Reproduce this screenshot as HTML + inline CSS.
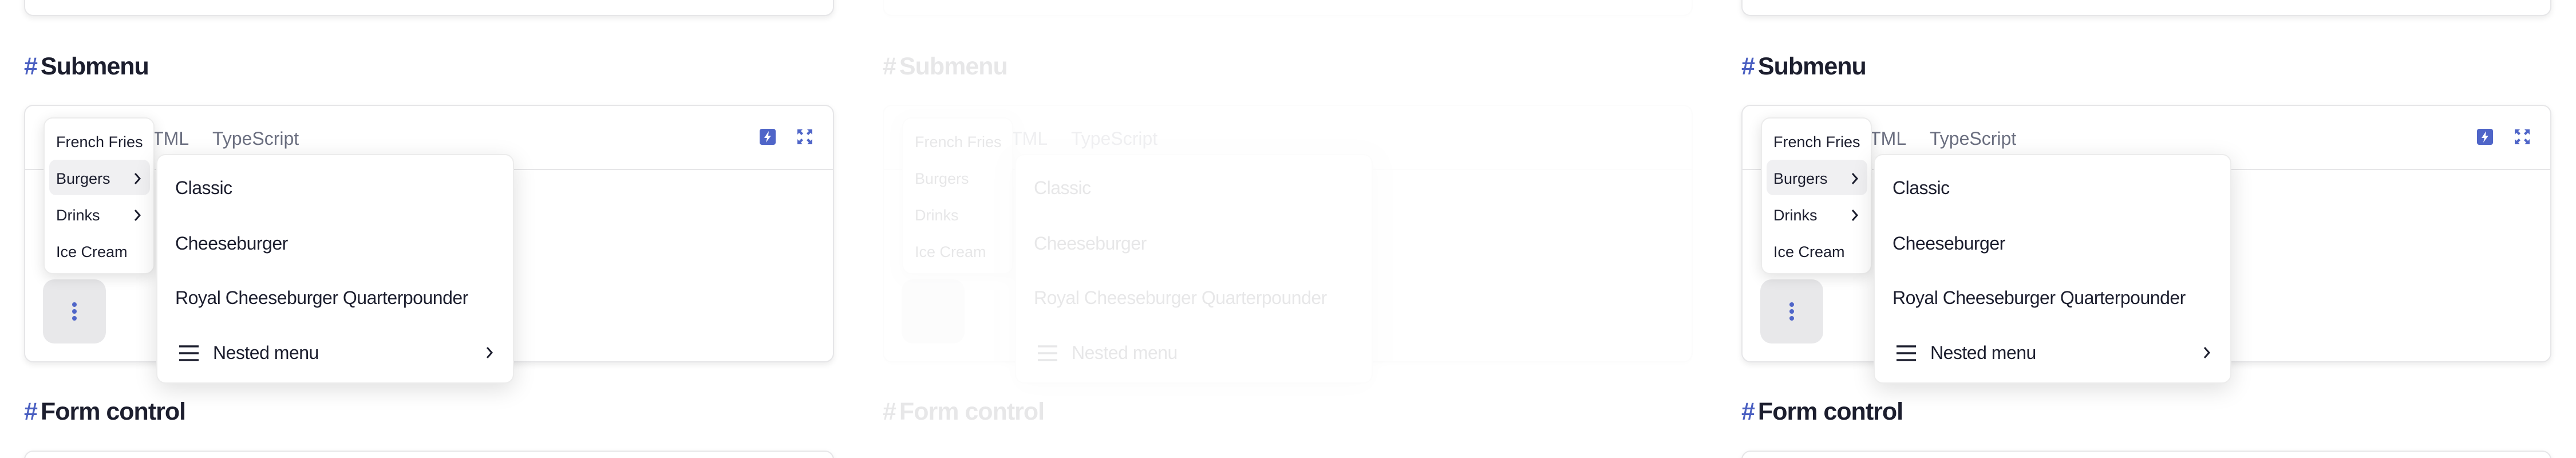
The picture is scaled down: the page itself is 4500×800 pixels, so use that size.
<!DOCTYPE html>
<html style="width:4500px;height:800px;overflow:hidden"><head><meta charset="utf-8"><style>
*{box-sizing:border-box;margin:0;padding:0}
body{width:4500px;height:800px;background:#fff;overflow:hidden;position:relative;font-family:"Liberation Sans",sans-serif;color:#1c1e2e}
.p{position:absolute;top:0;width:1500px;height:800px;overflow:hidden}
.card{position:absolute;left:42px;width:1415px;background:#fff;border:2px solid #e6e6e8;border-radius:16px;box-shadow:0 4px 10px rgba(0,0,0,.08)}
.h{position:absolute;left:42px;font-weight:bold;font-size:43px;letter-spacing:-1px;color:#1c1e2e}
.h b{color:#4a5fc1;margin-right:6px}
.tab{position:absolute;top:224px;font-size:32px;color:#6b6f80}
.m1{position:absolute;left:76px;top:205px;width:194px;height:274px;background:#fff;border:2px solid #ececec;border-radius:16px;box-shadow:0 6px 24px rgba(0,0,0,.12)}
.i1{position:absolute;left:20px;font-size:27px;color:#1c1e2e}
.ch{position:absolute}
.m2{position:absolute;left:273px;top:269px;width:625px;height:401px;background:#fff;border:2px solid #ececec;border-radius:16px;box-shadow:0 10px 40px rgba(0,0,0,.13)}
.i2{position:absolute;left:31px;font-size:32px;letter-spacing:-.5px;color:#1c1e2e}
.ic{position:absolute;top:225px;width:28px;height:28px}
</style></head><body>

<div class="p" style="left:0">
 <div class="card" style="top:-20px;height:48px"></div>
 <div class="h" style="top:92px"><b>#</b>Submenu</div>
 <div class="card" style="top:183px;height:450px">
  <div style="position:absolute;left:0;right:0;top:110px;border-top:2px solid #e6e6e8"></div>
 </div>
 <div class="tab" style="left:243px">HTML</div>
 <div class="tab" style="left:371px">TypeScript</div>
 <svg class="ic" style="left:1327px" viewBox="0 0 28 28"><rect width="28" height="28" rx="4" fill="#4f65c8"/><path d="M16 4 L8 16 H13 L11 24 L20 12 H15 Z" fill="#fff"/></svg>
 <svg class="ic" style="left:1392px" viewBox="0 0 28 28" fill="#4f65c8"><path d="M1 1H10L7 4L11 8L8 11L4 7L1 10Z"/><path d="M27 1H18L21 4L17 8L20 11L24 7L27 10Z"/><path d="M1 27H10L7 24L11 20L8 17L4 21L1 18Z"/><path d="M27 27H18L21 24L17 20L20 17L24 21L27 18Z"/></svg>
 <div style="position:absolute;left:75px;top:488px;width:110px;height:112px;background:#e8e8ea;border-radius:20px">
  <div style="position:absolute;left:51px;top:40px;width:8px;height:8px;border-radius:50%;background:#4f65c8;box-shadow:0 12px 0 #4f65c8,0 24px 0 #4f65c8"></div>
 </div>
 <div class="m1">
  <div style="position:absolute;left:8px;top:72px;width:176px;height:62px;background:#f0f0f2;border-radius:12px"></div>
  <div class="i1" style="top:26px">French Fries</div>
  <div class="i1" style="top:90px">Burgers</div><svg class="ch" style="left:156px;top:94px" width="12" height="22" viewBox="0 0 12 22"><path d="M2 2L10 11L2 20" stroke="#1c1e2e" stroke-width="3" fill="none"/></svg>
  <div class="i1" style="top:154px">Drinks</div><svg class="ch" style="left:156px;top:158px" width="12" height="22" viewBox="0 0 12 22"><path d="M2 2L10 11L2 20" stroke="#1c1e2e" stroke-width="3" fill="none"/></svg>
  <div class="i1" style="top:218px">Ice Cream</div>
 </div>
 <div class="m2">
  <div class="i2" style="top:39px">Classic</div>
  <div class="i2" style="top:136px">Cheeseburger</div>
  <div class="i2" style="top:231px">Royal Cheeseburger Quarterpounder</div>
  <svg style="position:absolute;left:36px;top:331px" width="38" height="30" viewBox="0 0 38 30"><path d="M2 3H36M2 15H36M2 27H36" stroke="#1c1e2e" stroke-width="3.5"/></svg>
  <div class="i2" style="left:97px;top:327px">Nested menu</div>
  <svg class="ch" style="left:574px;top:334px" width="12" height="22" viewBox="0 0 12 22"><path d="M2 2L10 11L2 20" stroke="#1c1e2e" stroke-width="3" fill="none"/></svg>
 </div>
 <div class="h" style="top:695px"><b>#</b>Form control</div>
 <div class="card" style="top:787px;height:40px"></div>
</div>

<div class="p" style="left:1500px;opacity:.1">
 <div class="card" style="top:-20px;height:48px"></div>
 <div class="h" style="top:92px"><b style="color:#1c1e2e">#</b>Submenu</div>
 <div class="card" style="top:183px;height:450px"><div style="position:absolute;left:0;right:0;top:110px;border-top:2px solid #e6e6e8"></div></div>
 <div class="tab" style="left:243px">HTML</div>
 <div class="tab" style="left:371px">TypeScript</div>
 <div style="position:absolute;left:75px;top:488px;width:110px;height:112px;background:#e8e8ea;border-radius:20px"></div>
 <div class="m1"><div class="i1" style="top:26px">French Fries</div><div class="i1" style="top:90px">Burgers</div><div class="i1" style="top:154px">Drinks</div><div class="i1" style="top:218px">Ice Cream</div></div>
 <div class="m2"><div class="i2" style="top:39px">Classic</div><div class="i2" style="top:136px">Cheeseburger</div><div class="i2" style="top:231px">Royal Cheeseburger Quarterpounder</div>
 <svg style="position:absolute;left:36px;top:331px" width="38" height="30" viewBox="0 0 38 30"><path d="M2 3H36M2 15H36M2 27H36" stroke="#1c1e2e" stroke-width="3.5"/></svg>
 <div class="i2" style="left:97px;top:327px">Nested menu</div></div>
 <div class="h" style="top:695px"><b style="color:#1c1e2e">#</b>Form control</div>
</div>

<div class="p" style="left:3000px">
 <div class="card" style="top:-20px;height:48px"></div>
 <div class="h" style="top:92px"><b>#</b>Submenu</div>
 <div class="card" style="top:183px;height:450px">
  <div style="position:absolute;left:0;right:0;top:110px;border-top:2px solid #e6e6e8"></div>
 </div>
 <div class="tab" style="left:243px">HTML</div>
 <div class="tab" style="left:371px">TypeScript</div>
 <svg class="ic" style="left:1327px" viewBox="0 0 28 28"><rect width="28" height="28" rx="4" fill="#4f65c8"/><path d="M16 4 L8 16 H13 L11 24 L20 12 H15 Z" fill="#fff"/></svg>
 <svg class="ic" style="left:1392px" viewBox="0 0 28 28" fill="#4f65c8"><path d="M1 1H10L7 4L11 8L8 11L4 7L1 10Z"/><path d="M27 1H18L21 4L17 8L20 11L24 7L27 10Z"/><path d="M1 27H10L7 24L11 20L8 17L4 21L1 18Z"/><path d="M27 27H18L21 24L17 20L20 17L24 21L27 18Z"/></svg>
 <div style="position:absolute;left:75px;top:488px;width:110px;height:112px;background:#e8e8ea;border-radius:20px">
  <div style="position:absolute;left:51px;top:40px;width:8px;height:8px;border-radius:50%;background:#4f65c8;box-shadow:0 12px 0 #4f65c8,0 24px 0 #4f65c8"></div>
 </div>
 <div class="m1">
  <div style="position:absolute;left:8px;top:72px;width:176px;height:62px;background:#f0f0f2;border-radius:12px"></div>
  <div class="i1" style="top:26px">French Fries</div>
  <div class="i1" style="top:90px">Burgers</div><svg class="ch" style="left:156px;top:94px" width="12" height="22" viewBox="0 0 12 22"><path d="M2 2L10 11L2 20" stroke="#1c1e2e" stroke-width="3" fill="none"/></svg>
  <div class="i1" style="top:154px">Drinks</div><svg class="ch" style="left:156px;top:158px" width="12" height="22" viewBox="0 0 12 22"><path d="M2 2L10 11L2 20" stroke="#1c1e2e" stroke-width="3" fill="none"/></svg>
  <div class="i1" style="top:218px">Ice Cream</div>
 </div>
 <div class="m2">
  <div class="i2" style="top:39px">Classic</div>
  <div class="i2" style="top:136px">Cheeseburger</div>
  <div class="i2" style="top:231px">Royal Cheeseburger Quarterpounder</div>
  <svg style="position:absolute;left:36px;top:331px" width="38" height="30" viewBox="0 0 38 30"><path d="M2 3H36M2 15H36M2 27H36" stroke="#1c1e2e" stroke-width="3.5"/></svg>
  <div class="i2" style="left:97px;top:327px">Nested menu</div>
  <svg class="ch" style="left:574px;top:334px" width="12" height="22" viewBox="0 0 12 22"><path d="M2 2L10 11L2 20" stroke="#1c1e2e" stroke-width="3" fill="none"/></svg>
 </div>
 <div class="h" style="top:695px"><b>#</b>Form control</div>
 <div class="card" style="top:787px;height:40px"></div>
</div>
</body></html>
